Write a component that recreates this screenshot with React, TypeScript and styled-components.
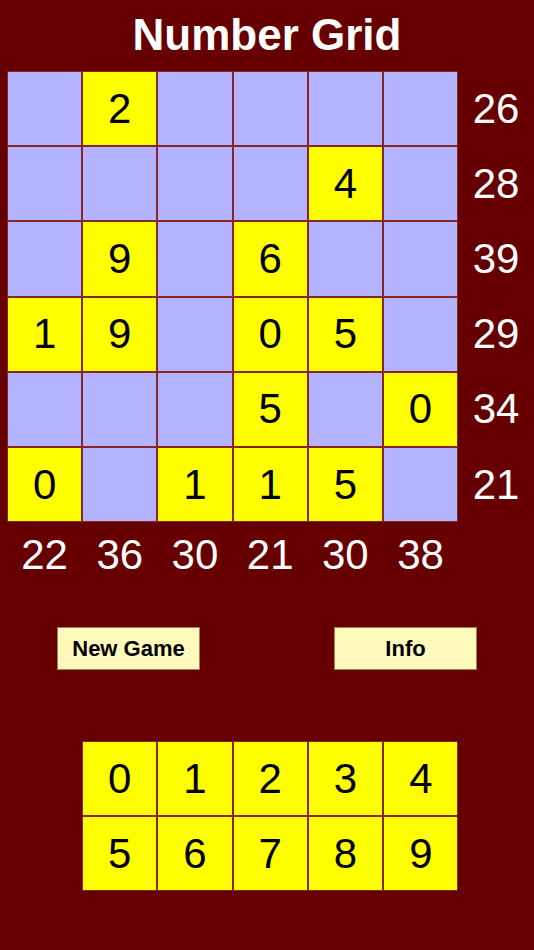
import React from 'react';
import styled, { createGlobalStyle } from 'styled-components';

const GlobalStyle = createGlobalStyle`
  html, body {
    margin: 0;
    padding: 0;
    background: #660000;
  }
  body {
    font-family: "Liberation Sans", Arial, sans-serif;
  }
`;

const board: (number | null)[][] = [
  [null, 2, null, null, null, null],
  [null, null, null, null, 4, null],
  [null, 9, null, 6, null, null],
  [1, 9, null, 0, 5, null],
  [null, null, null, 5, null, 0],
  [0, null, 1, 1, 5, null],
];
const rowSums = [26, 28, 39, 29, 34, 21];
const colSums = [22, 36, 30, 21, 30, 38];
const keys = [0, 1, 2, 3, 4, 5, 6, 7, 8, 9];

const Page = styled.div`
  width: 534px;
  height: 950px;
  display: flex;
  flex-direction: column;
  background: #660000;
`;

const Title = styled.h1`
  margin: 0;
  height: 71px;
  display: flex;
  align-items: center;
  justify-content: center;
  color: #ffffff;
  font-size: 44px;
  font-weight: bold;
  padding-bottom: 2px;
  box-sizing: border-box;
`;

const Board = styled.div`
  display: grid;
  grid-template-columns: repeat(6, 75.2px) 76px;
  grid-template-rows: repeat(6, 75.2px) 65px;
  margin-left: 7px;
`;

const Cell = styled.div<{ $filled: boolean }>`
  box-sizing: border-box;
  border: 1px solid #862626;
  background: ${(p) => (p.$filled ? '#ffff00' : '#b3b3ff')};
  color: #000000;
  font-size: 42px;
  display: flex;
  align-items: center;
  justify-content: center;
`;

const Sum = styled.div`
  color: #ffffff;
  font-size: 42px;
  display: flex;
  align-items: center;
  justify-content: center;
`;

const Buttons = styled.div`
  display: flex;
  justify-content: space-between;
  padding: 0 57px;
  margin-top: 40px;
`;

const Button = styled.button`
  width: 143px;
  height: 43px;
  box-sizing: border-box;
  border: 1px solid #a8804a;
  background: #fff9bb;
  color: #000000;
  font-family: "Liberation Sans", Arial, sans-serif;
  font-size: 22px;
  font-weight: bold;
  padding: 0;
  border-radius: 0;
`;

const Keypad = styled.div`
  display: grid;
  grid-template-columns: repeat(5, 75.3px);
  grid-template-rows: repeat(2, 75px);
  margin-left: 82px;
  margin-top: 71px;
`;

const Key = styled.div`
  box-sizing: border-box;
  border: 1px solid #862626;
  background: #ffff00;
  color: #000000;
  font-size: 42px;
  display: flex;
  align-items: center;
  justify-content: center;
`;

export default function App() {
  return (
    <Page>
      <GlobalStyle />
      <Title>Number Grid</Title>
      <Board>
        {board.map((row, r) => (
          <React.Fragment key={r}>
            {row.map((v, c) => (
              <Cell key={c} $filled={v !== null}>
                {v ?? ''}
              </Cell>
            ))}
            <Sum>{rowSums[r]}</Sum>
          </React.Fragment>
        ))}
        {colSums.map((s, c) => (
          <Sum key={c}>{s}</Sum>
        ))}
        <div />
      </Board>
      <Buttons>
        <Button>New Game</Button>
        <Button>Info</Button>
      </Buttons>
      <Keypad>
        {keys.map((k) => (
          <Key key={k}>{k}</Key>
        ))}
      </Keypad>
    </Page>
  );
}
